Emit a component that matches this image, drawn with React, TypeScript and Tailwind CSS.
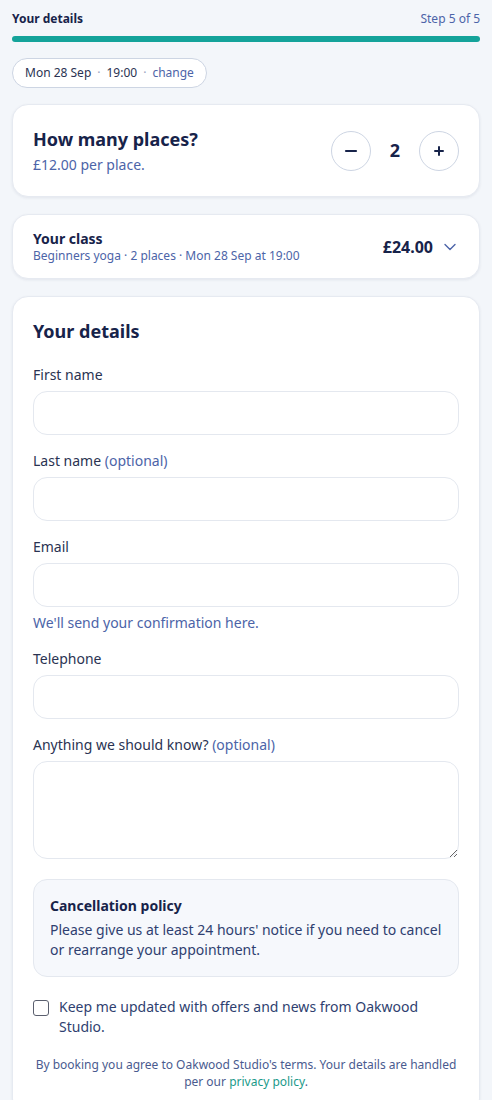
import { useState } from "react";

const font = { fontFamily: '"Noto Sans", "Open Sans", sans-serif' };

function Field({ label, optional, hint, textarea }: { label: string; optional?: boolean; hint?: string; textarea?: boolean }) {
  return (
    <div className="flex flex-col">
      <label className="text-[14px] leading-5 text-[#2a3352] mb-[6px]">
        {label}
        {optional && <span className="text-[#4c64a8]"> (optional)</span>}
      </label>
      {textarea ? (
        <textarea className="h-[98px] w-full rounded-[14px] border border-[#e4e8ef] bg-white px-3 py-2 outline-none" />
      ) : (
        <input className="h-[44px] w-full rounded-[14px] border border-[#e4e8ef] bg-white px-3 outline-none" />
      )}
      {hint && <p className="mt-[6px] text-[14px] leading-5 text-[#4c64a8]">{hint}</p>}
    </div>
  );
}

export default function App() {
  const [places, setPlaces] = useState(2);

  return (
    <div className="min-h-screen bg-[#f3f6fa] px-3 pt-[10px] pb-4" style={font}>
      <div className="flex items-center justify-between">
        <span className="text-[12px] font-bold text-[#17234a]">Your details</span>
        <span className="text-[12px] text-[#4c64a8]">Step 5 of 5</span>
      </div>
      <div className="mt-[8px] h-[6px] w-full rounded-full bg-[#14a39a]" />

      <div className="mt-[16px] inline-flex h-[30px] items-center gap-[6px] rounded-full border border-[#cdd5e3] bg-white px-3 text-[12px]">
        <span className="text-[#2a3352]">Mon 28 Sep</span>
        <span className="text-[#9aa6c2]">·</span>
        <span className="text-[#2a3352]">19:00</span>
        <span className="text-[#9aa6c2]">·</span>
        <span className="text-[#4c64a8]">change</span>
      </div>

      <div className="mt-[16px] flex h-[93px] items-center justify-between rounded-[16px] border border-[#e6eaf1] bg-white px-[20px] shadow-[0_1px_3px_rgba(20,35,80,0.08)]">
        <div>
          <h2 className="text-[18px] font-bold leading-6 text-[#17234a]">How many places?</h2>
          <p className="mt-[4px] text-[14px] leading-5 text-[#4c64a8]">£12.00 per place.</p>
        </div>
        <div className="flex items-center">
          <button
            onClick={() => setPlaces(Math.max(1, places - 1))}
            className="flex h-[40px] w-[40px] items-center justify-center rounded-full border border-[#cdd5e3] bg-white"
          >
            <svg width="14" height="14" viewBox="0 0 14 14"><path d="M2 7h10" stroke="#17234a" strokeWidth="2.2" strokeLinecap="round" /></svg>
          </button>
          <span className="w-[48px] text-center text-[18px] font-bold text-[#17234a]">{places}</span>
          <button
            onClick={() => setPlaces(places + 1)}
            className="flex h-[40px] w-[40px] items-center justify-center rounded-full border border-[#cdd5e3] bg-white"
          >
            <svg width="12" height="12" viewBox="0 0 12 12"><path d="M2 6h8M6 2v8" stroke="#17234a" strokeWidth="2" strokeLinecap="round" /></svg>
          </button>
        </div>
      </div>

      <div className="mt-[17px] flex h-[65px] items-center justify-between rounded-[16px] border border-[#e6eaf1] bg-white px-[20px] shadow-[0_1px_3px_rgba(20,35,80,0.08)]">
        <div>
          <p className="text-[14px] font-bold leading-[18px] text-[#17234a]">Your class</p>
          <p className="text-[12px] leading-[16px] text-[#4c64a8]">Beginners yoga · 2 places · Mon 28 Sep at 19:00</p>
        </div>
        <div className="flex items-center gap-[11px]">
          <span className="text-[16px] font-bold text-[#17234a]">£24.00</span>
          <svg width="12" height="8" viewBox="0 0 12 8" className="mr-[3px]"><path d="M1 1.5l5 5 5-5" fill="none" stroke="#4c64a8" strokeWidth="1.4" strokeLinecap="round" strokeLinejoin="round" /></svg>
        </div>
      </div>

      <div className="mt-[17px] rounded-[16px] border border-[#e6eaf1] bg-white px-[20px] pt-[20px] pb-[24px] shadow-[0_1px_3px_rgba(20,35,80,0.08)]">
        <h2 className="text-[18px] font-bold leading-7 text-[#17234a]">Your details</h2>
        <div className="mt-[20px] flex flex-col gap-[16px]">
          <Field label="First name" />
          <Field label="Last name" optional />
          <Field label="Email" hint="We'll send your confirmation here." />
          <Field label="Telephone" />
          <Field label="Anything we should know?" optional textarea />
        </div>

        <div className="mt-[20px] rounded-[14px] border border-[#e4e8ef] bg-[#f6f8fc] pl-[16px] pr-[10px] pt-[16px] pb-[16px]">
          <p className="text-[14px] font-bold leading-5 text-[#17234a]">Cancellation policy</p>
          <p className="mt-[4px] text-[14px] leading-5 text-[#2f3f70]">
            Please give us at least 24 hours' notice if you need to cancel or rearrange your appointment.
          </p>
        </div>

        <label className="mt-[20px] flex items-start gap-[10px]">
          <input type="checkbox" className="mt-[3px] h-[16px] w-[16px] shrink-0 appearance-none rounded-[3px] border border-[#5a5f6e] bg-white" />
          <span className="text-[14px] leading-5 text-[#2f3f70]">Keep me updated with offers and news from Oakwood Studio.</span>
        </label>

        <p className="mt-[19px] text-center text-[12px] leading-[17px] text-[#4a5b8f]">
          By booking you agree to Oakwood Studio's terms. Your details are handled per our{" "}
          <span className="text-[#1a9a8a]">privacy policy</span>.
        </p>
      </div>
    </div>
  );
}
